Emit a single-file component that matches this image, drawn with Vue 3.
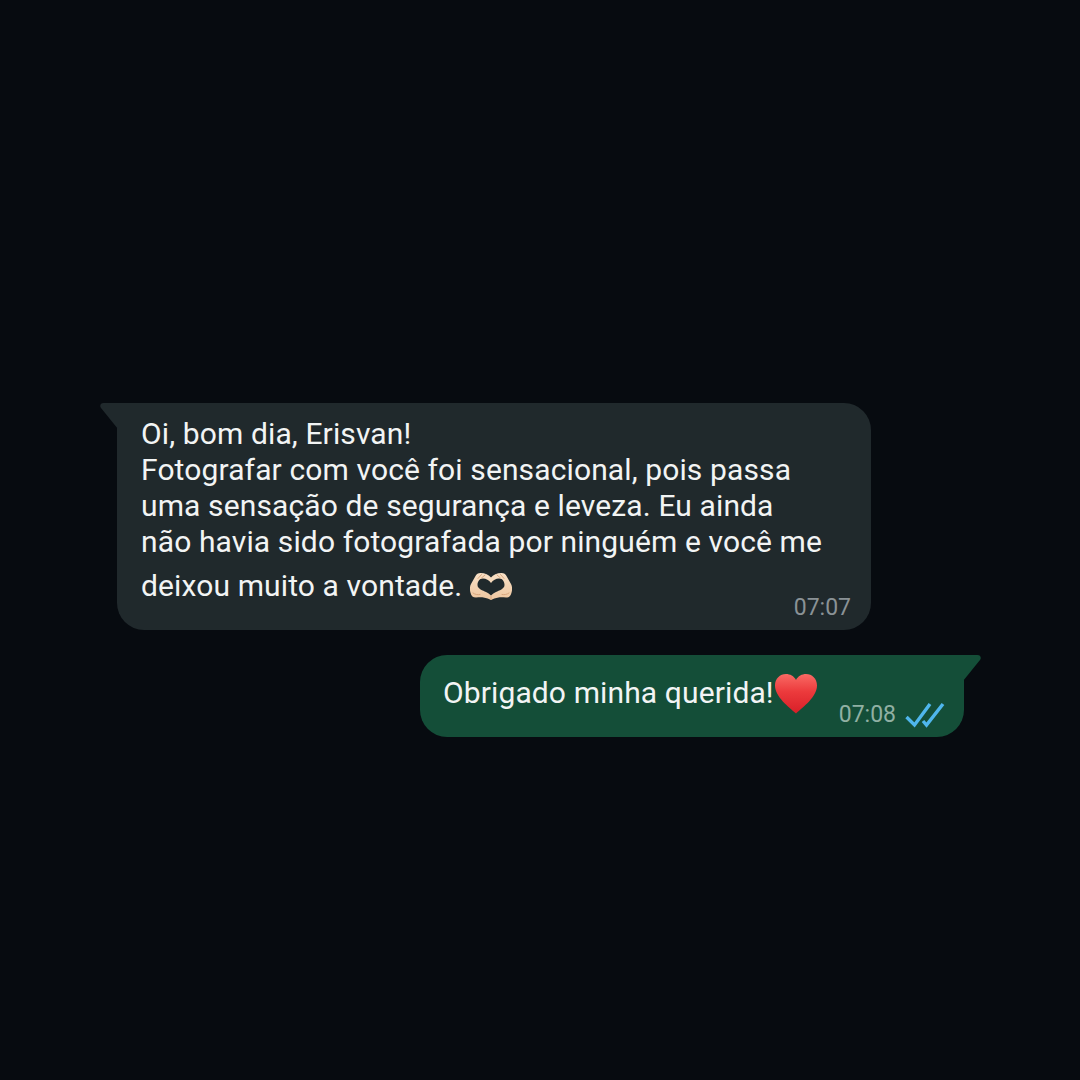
<template>
  <div class="chat">
    <div class="bubble incoming">
      <svg class="tail tail-left" viewBox="0 0 18 26" width="18" height="26">
        <path d="M18 0H3.5C.8 0-.8 2.6 1 5L18 26Z" fill="#20292c" />
      </svg>
      <p class="text">Oi, bom dia, Erisvan!<br />Fotografar com você foi sensacional, pois passa<br />uma sensação de segurança e leveza. Eu ainda<br />não havia sido fotografada por ninguém e você me</p>
      <p class="text last-line">
        deixou muito a vontade.
        <svg class="hands" viewBox="0 0 42 27" width="42" height="27">
          <defs>
            <linearGradient id="handFill" x1="0" y1="0" x2="0" y2="1">
              <stop offset="0" stop-color="#f8e0c6" />
              <stop offset="1" stop-color="#eec6a0" />
            </linearGradient>
          </defs>
          <path d="M21 4.500C19 2 15 0 10.500 0 8 0 6.500 1.200 5.500 3L1 11C-.5 14-.3 17 .6 20 1.300 23 3 24.500 6 24.500 8.500 24.500 11 24 13.500 24.500 16.500 25 19 26 21 27 23 26 25.500 25 28.500 24.500 31 24 33.500 24.500 36 24.500 39 24.500 40.700 23 41.400 20 42.300 17 42.500 14 41 11L36.500 3C35.500 1.200 34 0 31.500 0 27 0 23 2 21 4.500Z" fill="url(#handFill)" />
          <path d="M21 10C19 7 16 5.500 13 5.500 9 5.500 7.500 9 7.500 12 7.500 16 13 17.500 16 19 18 20 19.500 21 21 22.500 22.500 21 24 20 26 19 29 17.500 34.500 16 34.500 12 34.500 9 33 5.500 29 5.500 26 5.500 23 7 21 10Z" fill="#20292c" />
          <path d="M3 20C5 21.500 7.500 22 10 21.500M39 20C37 21.500 34.500 22 32 21.500M11.500 1.500 8 5.500M15 2 11.500 5M30.500 1.500 34 5.500M27 2 30.500 5M21 23.500V26.500" stroke="#d7a67e" stroke-width="1" fill="none" stroke-linecap="round" />
        </svg>
      </p>
      <span class="time">07:07</span>
    </div>

    <div class="bubble outgoing">
      <svg class="tail tail-right" viewBox="0 0 18 26" width="18" height="26">
        <path d="M0 0H14.500C17.200 0 18.800 2.600 17 5L0 26Z" fill="#144e38" />
      </svg>
      <p class="text reply">
        Obrigado minha querida!<svg class="heart" viewBox="0 0 44 41" width="44" height="41">
          <defs>
            <linearGradient id="heartFill" x1="0" y1="0" x2="0" y2="1">
              <stop offset="0" stop-color="#f96a64" />
              <stop offset=".45" stop-color="#ec3a3c" />
              <stop offset="1" stop-color="#d81f28" />
            </linearGradient>
          </defs>
          <path d="M22 40.500C15 34 1 24 1 12.500 1 5.500 6 1 12 1 16 1 20 3 22 7 24 3 28 1 32 1 38 1 43 5.500 43 12.500 43 24 29 34 22 40.500Z" fill="url(#heartFill)" />
        </svg>
      </p>
      <div class="meta">
        <span class="time sent">07:08</span>
        <svg class="checks" viewBox="0 0 40 26" width="40" height="26">
          <path d="M1.500 15 9.500 23 25 2M18 19 21.500 23 38 2" fill="none" stroke="#4fb6ec" stroke-width="3.4" />
        </svg>
      </div>
    </div>
  </div>
</template>

<script setup>
</script>

<style>
html,
body {
  background: #070b10;
}
</style>

<style scoped>
.chat {
  width: 1080px;
  height: 1080px;
  box-sizing: border-box;
  padding-top: 403px;
  display: flex;
  flex-direction: column;
  gap: 25px;
  background: #070b10;
  font-family: Roboto, "Liberation Sans", sans-serif;
  color: #f2f4f4;
}

.bubble {
  position: relative;
  box-sizing: border-box;
}

.incoming {
  width: 754px;
  height: 227px;
  margin-left: 117px;
  padding: 13px 24px 0;
  background: #20292c;
  border-radius: 0 27px 27px 27px;
}

.outgoing {
  width: 544px;
  height: 82px;
  margin-left: 420px;
  padding: 18px 23px 0;
  background: #144e38;
  border-radius: 27px 0 27px 27px;
  display: flex;
  justify-content: space-between;
}

.tail {
  position: absolute;
  top: 0;
}

.tail-left {
  left: -17px;
}

.tail-right {
  right: -17px;
}

.text {
  margin: 0;
  font-size: 30px;
  letter-spacing: 0.12px;
  line-height: 36px;
  white-space: nowrap;
}

.last-line {
  margin-top: 8px;
  display: flex;
  align-items: center;
  gap: 8px;
}

.hands {
  flex: none;
}

.reply {
  display: flex;
  align-items: center;
  height: 40px;
}

.heart {
  flex: none;
}

.time {
  font-size: 23px;
  line-height: 26px;
  color: #8a9296;
}

.incoming .time {
  position: absolute;
  right: 20px;
  bottom: 9px;
}

.meta {
  display: flex;
  align-items: center;
  gap: 9px;
  height: 26px;
  margin-top: 29px;
  margin-right: -4px;
}

.sent {
  color: #90b0a3;
}

.checks {
  flex: none;
}
</style>
